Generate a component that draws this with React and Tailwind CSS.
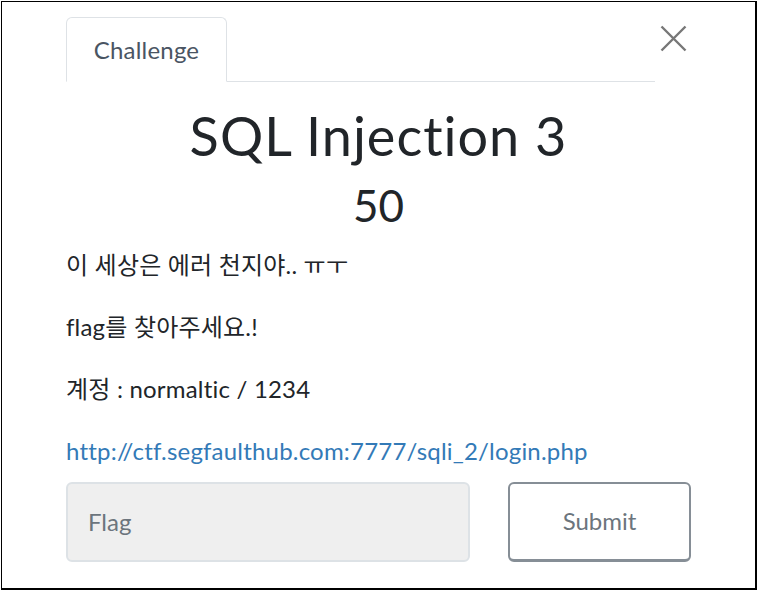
import React from 'react';

const font = { fontFamily: 'Lato, "Noto Sans CJK KR", sans-serif' };

const App = () => {
    return (
        <div className="w-[758px] h-[591px] bg-white" style={font}>
            <div className="ml-px mt-px w-[756px] h-[589px] border border-black border-r-2 border-b-2 box-border">
                <div className="mx-auto w-[625px] pt-[15px]">
                    <div className="flex items-end">
                        <div className="flex-1 flex border-b border-[#dee2e6]">
                            <div className="-mb-px h-[65px] w-[161px] flex items-center justify-center border border-[#dee2e6] border-b-white rounded-t-[6px] bg-white text-[24px] text-[#4a5563] tracking-[0.2px]">
                                Challenge
                            </div>
                        </div>
                        <button className="w-[36px] self-start mt-[8px] flex justify-center text-[#777]">
                            <svg width="27" height="27" viewBox="0 0 27 27" fill="none" stroke="currentColor" strokeWidth="2.4">
                                <path d="M1.5 1.5 L25.5 25.5 M25.5 1.5 L1.5 25.5" />
                            </svg>
                        </button>
                    </div>

                    <h3 className="mt-[22px] text-center text-[54px] leading-[1.2] text-[#212529] tracking-[1px]">SQL Injection 3</h3>
                    <h4 className="mt-[10px] text-center text-[44px] leading-[1.2] text-[#212529]">50</h4>

                    <div className="mt-[14px] text-[24px] tracking-[0.2px] text-[#212529]">
                        <p className="leading-[38px] mb-[24px]">이 세상은 에러 천지야.. ㅠㅜ</p>
                        <p className="leading-[38px] mb-[24px]">flag를 찾아주세요.!</p>
                        <p className="leading-[38px] mb-[24px]">계정 : normaltic / 1234</p>
                        <p className="leading-[38px]">
                            <a href="#" className="text-[#337ab7]">http://ctf.segfaulthub.com:7777/sqli_2/login.php</a>
                        </p>
                    </div>

                    <div className="mt-[12px] flex justify-between">
                        <input
                            placeholder="Flag"
                            className="w-[404px] h-[80px] px-[20px] bg-[#efefef] border-2 border-[#dde2e6] rounded-[6px] text-[24px] placeholder:text-[#6c757d] outline-none"
                            style={font}
                        />
                        <button className="w-[183px] h-[80px] border-2 border-[#868e96] border-b-[3px] rounded-[6px] bg-white text-[24px] text-[#6c757d]">
                            Submit
                        </button>
                    </div>
                </div>
            </div>
        </div>
    );
};

export default App;
